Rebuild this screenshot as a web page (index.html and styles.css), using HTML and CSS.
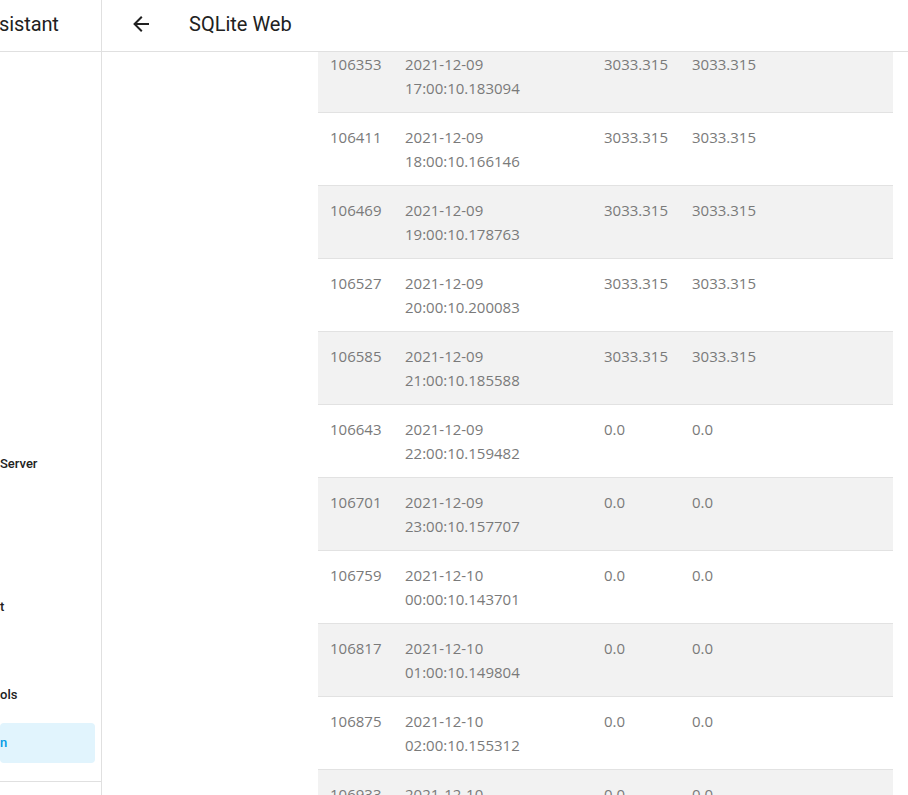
FILE: index.html
```html
<!DOCTYPE html>
<html>
<head>
<meta charset="utf-8">
<link rel="stylesheet" href="styles.css">
</head>
<body>
<div class="app">
  <aside class="sidebar">
    <div class="side-title">sistant</div>
    <nav class="side-list">
      <div class="item item-server">Server</div>
      <div class="item item-t">t</div>
      <div class="item item-tools">ols</div>
      <div class="item item-active">n</div>
    </nav>
    <div class="side-divider"></div>
  </aside>
  <main class="main">
    <header class="toolbar">
      <span class="back">
        <svg viewBox="0 0 24 24" width="24" height="24"><path d="M20,11V13H8L13.5,18.5L12.08,19.92L4.16,12L12.08,4.08L13.5,5.5L8,11H20Z"/></svg>
      </span>
      <span class="title">SQLite Web</span>
    </header>
    <div class="content">
      <table class="data">
        <colgroup><col class="c-id"><col class="c-date"><col class="c-v"><col></colgroup>
        <tbody>
          <tr class="odd"><td>106353</td><td>2021-12-09 17:00:10.183094</td><td>3033.315</td><td>3033.315</td></tr>
          <tr><td>106411</td><td>2021-12-09 18:00:10.166146</td><td>3033.315</td><td>3033.315</td></tr>
          <tr class="odd"><td>106469</td><td>2021-12-09 19:00:10.178763</td><td>3033.315</td><td>3033.315</td></tr>
          <tr><td>106527</td><td>2021-12-09 20:00:10.200083</td><td>3033.315</td><td>3033.315</td></tr>
          <tr class="odd"><td>106585</td><td>2021-12-09 21:00:10.185588</td><td>3033.315</td><td>3033.315</td></tr>
          <tr><td>106643</td><td>2021-12-09 22:00:10.159482</td><td>0.0</td><td>0.0</td></tr>
          <tr class="odd"><td>106701</td><td>2021-12-09 23:00:10.157707</td><td>0.0</td><td>0.0</td></tr>
          <tr><td>106759</td><td>2021-12-10 00:00:10.143701</td><td>0.0</td><td>0.0</td></tr>
          <tr class="odd"><td>106817</td><td>2021-12-10 01:00:10.149804</td><td>0.0</td><td>0.0</td></tr>
          <tr><td>106875</td><td>2021-12-10 02:00:10.155312</td><td>0.0</td><td>0.0</td></tr>
          <tr class="odd"><td>106933</td><td>2021-12-10 03:00:10.151920</td><td>0.0</td><td>0.0</td></tr>
        </tbody>
      </table>
    </div>
  </main>
</div>
</body>
</html>
```
FILE: styles.css
```css
html, body {
  margin: 0;
  padding: 0;
  height: 100%;
  background: #fff;
  overflow: hidden;
}
.app {
  display: flex;
  height: 795px;
  font-family: Roboto, "Liberation Sans", sans-serif;
}
.sidebar {
  width: 101px;
  flex: none;
  border-right: 1px solid #e0e0e0;
  overflow: hidden;
  display: flex;
  flex-direction: column;
}
.side-title {
  height: 51px;
  border-bottom: 1px solid #e0e0e0;
  font-size: 20px;
  color: #212121;
  line-height: 48px;
  white-space: nowrap;
  margin-left: -1px;
  letter-spacing: -0.1px;
}
.side-list {
  display: flex;
  flex-direction: column;
}
.item {
  height: 40px;
  line-height: 40px;
  font-size: 13px;
  font-weight: 500;
  color: #212121;
  margin-right: 6px;
  border-radius: 4px;
  white-space: nowrap;
}
.item-server { margin-top: 392px; }
.item-t { margin-top: 103px; }
.item-tools { margin-top: 48px; }
.item-active {
  margin-top: 8px;
  background: #e1f4fd;
  color: #039be5;
}
.side-divider {
  margin-top: 18px;
  border-top: 1px solid #e0e0e0;
}
.main {
  flex: 1;
  display: flex;
  flex-direction: column;
  min-width: 0;
}
.toolbar {
  height: 51px;
  flex: none;
  border-bottom: 1px solid #e0e0e0;
  display: flex;
  align-items: center;
  background: #fff;
  position: relative;
  z-index: 1;
  padding-bottom: 3px;
  box-sizing: border-box;
  height: 52px;
}
.back {
  margin-left: 27px;
  width: 24px;
  height: 24px;
  display: flex;
}
.back svg { fill: #212121; }
.title {
  margin-left: 36px;
  font-size: 20px;
  color: #212121;
}
.content {
  flex: 1;
  overflow: hidden;
  padding: 0 15px 0 216px;
}
.data {
  margin-top: -13px;
  width: 575px;
  table-layout: fixed;
  border-collapse: collapse;
  font-family: "Open Sans", "Liberation Sans", sans-serif;
  font-size: 15px;
  color: #7a7a7a;
}
.c-id { width: 75px; }
.c-date { width: 199px; }
.c-v { width: 88px; }
.data td {
  padding: 12px 12px;
  line-height: 24px;
  height: 48px;
  vertical-align: top;
  border-top: 1px solid #e2e2e2;
}
.data tr.odd td { background: #f2f2f2; }
```
